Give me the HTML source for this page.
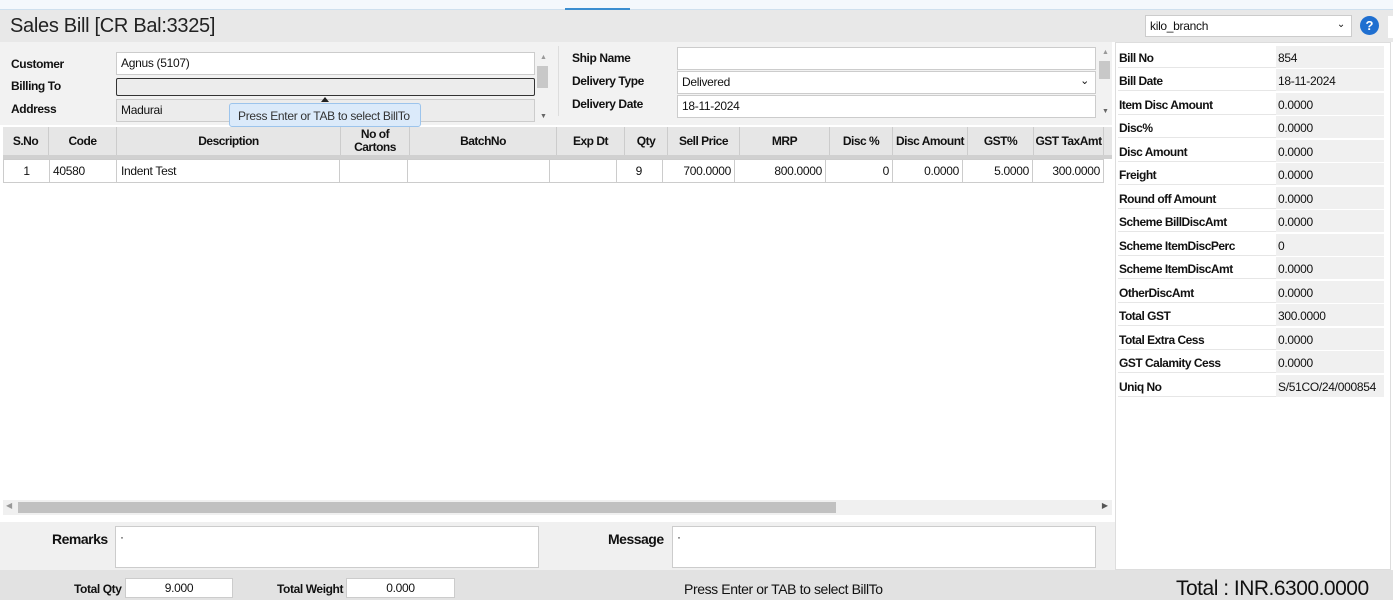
<!DOCTYPE html>
<html><head><style>
*{box-sizing:border-box;margin:0;padding:0}
body{width:1393px;height:600px;overflow:hidden;background:#fff;font-family:"Liberation Sans",sans-serif;font-size:12px;color:#111;position:relative}
.a{position:absolute}
.lbl{font-weight:bold;font-size:12px;letter-spacing:-0.4px}
.inp{position:absolute;background:#fff;border:1px solid #ccc;font-size:12px;padding:3px 4px;letter-spacing:-0.3px}
.hd{position:absolute;top:127px;height:28px;border-right:1px solid #ccc;font-weight:bold;font-size:12px;text-align:center;display:flex;align-items:center;justify-content:center;letter-spacing:-0.5px;line-height:13px}
.cl{position:absolute;top:159px;height:24px;border:1px solid #ccc;border-left:none;font-size:12px;display:flex;align-items:center;padding:0 3px;letter-spacing:-0.3px}
.rr{position:absolute;left:1118px;width:266px;height:22px;border-bottom:1px solid #e6e6e6;font-size:12px}
.rr b{position:absolute;left:1px;top:5px;letter-spacing:-0.5px}
.rr span{position:absolute;left:158px;top:0;width:108px;height:22px;background:#f0f0f0;padding:5px 2px;letter-spacing:-0.3px}
</style></head><body>
<div class="a" style="left:0;top:0;width:1393px;height:10px;background:#f4f8fc;border-bottom:1px solid #cfe0ee"></div>
<div class="a" style="left:565px;top:8px;width:65px;height:2px;background:#3b8ed0"></div>
<div class="a" style="left:0;top:10px;width:1393px;height:32px;background:#e8e8e8"></div>
<div class="a" style="left:10px;top:15px;font-size:20px;color:#222;letter-spacing:-0.3px">Sales Bill [CR Bal:3325]</div>
<div class="inp" style="left:1145px;top:15px;width:207px;height:22px;font-size:12px">kilo_branch<span style="position:absolute;right:6px;top:3px;font-size:10px">&#8964;</span></div>
<div class="a" style="left:1360px;top:16px;width:19px;height:19px;border-radius:50%;background:#1f6fd0;color:#fff;font-weight:bold;font-size:13px;text-align:center;line-height:19px">?</div>
<div class="a" style="left:1388px;top:16px;width:5px;height:22px;background:#fff"></div>

<!-- form area -->
<div class="a" style="left:0;top:42px;width:1112px;height:83px;background:#f2f2f2"></div>
<div class="a lbl" style="left:11px;top:57px">Customer</div>
<div class="a lbl" style="left:11px;top:79px">Billing To</div>
<div class="a lbl" style="left:11px;top:102px">Address</div>
<div class="inp" style="left:116px;top:52px;width:284px;height:23px;width:419px">Agnus (5107)</div>
<div class="inp" style="left:116px;top:78px;width:419px;height:18px;background:#ececec;border:1px solid #333;border-radius:2px"></div>
<div class="inp" style="left:116px;top:99px;width:419px;height:23px;background:#ececec">Madurai</div>
<div class="a" style="left:537px;top:52px;width:12px;height:70px;background:#f2f2f2"><div style="position:absolute;top:14px;left:0;width:11px;height:22px;background:#c8c8c8"></div><div style="position:absolute;top:2px;left:3px;font-size:7px;color:#999">&#9650;</div><div style="position:absolute;bottom:2px;left:3px;font-size:7px;color:#666">&#9660;</div></div>
<div class="a" style="left:229px;top:103px;width:192px;height:24px;background:#dbeafa;border:1px solid #9cc4ec;border-radius:3px;font-size:12px;padding:5px 8px;color:#333;letter-spacing:-0.3px">Press Enter or TAB to select BillTo</div>
<div class="a" style="left:321px;top:97px;width:0;height:0;border-left:4px solid transparent;border-right:4px solid transparent;border-bottom:5px solid #222"></div>
<div class="a" style="left:558px;top:46px;width:1px;height:70px;background:#ddd"></div>
<div class="a lbl" style="left:572px;top:51px">Ship Name</div>
<div class="a lbl" style="left:572px;top:74px">Delivery Type</div>
<div class="a lbl" style="left:572px;top:97px">Delivery Date</div>
<div class="inp" style="left:677px;top:47px;width:419px;height:23px"></div>
<div class="inp" style="left:677px;top:71px;width:419px;height:23px">Delivered<span style="position:absolute;right:6px;top:2px;font-size:11px">&#8964;</span></div>
<div class="inp" style="left:677px;top:95px;width:419px;height:23px">18-11-2024</div>
<div class="a" style="left:1099px;top:47px;width:12px;height:70px;background:#f2f2f2"><div style="position:absolute;top:14px;left:0;width:11px;height:18px;background:#c8c8c8"></div><div style="position:absolute;top:2px;left:3px;font-size:7px;color:#999">&#9650;</div><div style="position:absolute;bottom:2px;left:3px;font-size:7px;color:#666">&#9660;</div></div>

<!-- grid -->
<div class="a" style="left:3px;top:127px;width:1109px;height:28px;background:#e6e6e6"></div>
<div class="a" style="left:3px;top:155px;width:1109px;height:4px;background:#d0d0d0"></div>
<div class="hd" style="left:3px;width:46px">S.No</div>
<div class="hd" style="left:49px;width:68px">Code</div>
<div class="hd" style="left:117px;width:224px">Description</div>
<div class="hd" style="left:341px;width:69px">No of<br>Cartons</div>
<div class="hd" style="left:410px;width:147px">BatchNo</div>
<div class="hd" style="left:557px;width:68px">Exp Dt</div>
<div class="hd" style="left:625px;width:43px">Qty</div>
<div class="hd" style="left:668px;width:72px">Sell Price</div>
<div class="hd" style="left:740px;width:90px">MRP</div>
<div class="hd" style="left:830px;width:63px">Disc %</div>
<div class="hd" style="left:893px;width:75px">Disc Amount</div>
<div class="hd" style="left:968px;width:66px">GST%</div>
<div class="hd" style="left:1034px;width:70px">GST TaxAmt</div>
<div class="cl" style="left:3px;width:47px;border-left:1px solid #ccc;justify-content:center">1</div>
<div class="cl" style="left:50px;width:67px">40580</div>
<div class="cl" style="left:117px;width:223px;padding-left:4px">Indent Test</div>
<div class="cl" style="left:340px;width:68px"></div>
<div class="cl" style="left:408px;width:142px"></div>
<div class="cl" style="left:550px;width:67px"></div>
<div class="cl" style="left:617px;width:46px;justify-content:flex-end;padding-right:20px">9</div>
<div class="cl" style="left:663px;width:72px;justify-content:flex-end">700.0000</div>
<div class="cl" style="left:735px;width:91px;justify-content:flex-end">800.0000</div>
<div class="cl" style="left:826px;width:67px;justify-content:flex-end">0</div>
<div class="cl" style="left:893px;width:70px;justify-content:flex-end">0.0000</div>
<div class="cl" style="left:963px;width:70px;justify-content:flex-end">5.0000</div>
<div class="cl" style="left:1033px;width:71px;justify-content:flex-end">300.0000</div>
<div class="a" style="left:3px;top:500px;width:1109px;height:15px;background:#f0f0f0"><div style="position:absolute;left:15px;top:2px;width:818px;height:11px;background:#c1c1c1"></div><div style="position:absolute;left:3px;top:1px;font-size:8px;color:#999">&#9664;</div><div style="position:absolute;right:4px;top:1px;font-size:8px;color:#555">&#9654;</div></div>

<!-- remarks -->
<div class="a" style="left:0;top:522px;width:1115px;height:48px;background:#f0f0f0"></div>
<div class="a" style="left:52px;top:531px;font-size:14px;font-weight:bold;letter-spacing:-0.5px">Remarks</div>
<div class="inp" style="left:115px;top:526px;width:424px;height:42px">·</div>
<div class="a" style="left:608px;top:531px;font-size:14px;font-weight:bold;letter-spacing:-0.5px">Message</div>
<div class="inp" style="left:672px;top:526px;width:424px;height:42px">·</div>
<div class="a" style="left:0;top:570px;width:1393px;height:30px;background:#e2e2e2"></div>
<div class="a lbl" style="left:74px;top:582px">Total Qty</div>
<div class="inp" style="left:125px;top:578px;width:108px;height:20px;text-align:center;padding:2px">9.000</div>
<div class="a lbl" style="left:277px;top:582px">Total Weight</div>
<div class="inp" style="left:346px;top:578px;width:109px;height:20px;text-align:center;padding:2px">0.000</div>
<div class="a" style="left:684px;top:581px;font-size:14px;letter-spacing:-0.4px">Press Enter or TAB to select BillTo</div>
<div class="a" style="left:1176px;top:577px;font-size:21px;letter-spacing:-0.5px">Total : INR.6300.0000</div>

<!-- right panel -->
<div class="a" style="left:1115px;top:42px;width:276px;height:528px;border:1px solid #ddd;background:#fff"></div>
<div class="rr" style="top:46px"><b>Bill No</b><span>854</span></div>
<div class="rr" style="top:69px"><b>Bill Date</b><span>18-11-2024</span></div>
<div class="rr" style="top:93px"><b>Item Disc Amount</b><span>0.0000</span></div>
<div class="rr" style="top:116px"><b>Disc%</b><span>0.0000</span></div>
<div class="rr" style="top:140px"><b>Disc Amount</b><span>0.0000</span></div>
<div class="rr" style="top:163px"><b>Freight</b><span>0.0000</span></div>
<div class="rr" style="top:187px"><b>Round off Amount</b><span>0.0000</span></div>
<div class="rr" style="top:210px"><b>Scheme BillDiscAmt</b><span>0.0000</span></div>
<div class="rr" style="top:234px"><b>Scheme ItemDiscPerc</b><span>0</span></div>
<div class="rr" style="top:257px"><b>Scheme ItemDiscAmt</b><span>0.0000</span></div>
<div class="rr" style="top:281px"><b>OtherDiscAmt</b><span>0.0000</span></div>
<div class="rr" style="top:304px"><b>Total GST</b><span>300.0000</span></div>
<div class="rr" style="top:328px"><b>Total Extra Cess</b><span>0.0000</span></div>
<div class="rr" style="top:351px"><b>GST Calamity Cess</b><span>0.0000</span></div>
<div class="rr" style="top:375px"><b>Uniq No</b><span>S/51CO/24/000854</span></div>
</body></html>
